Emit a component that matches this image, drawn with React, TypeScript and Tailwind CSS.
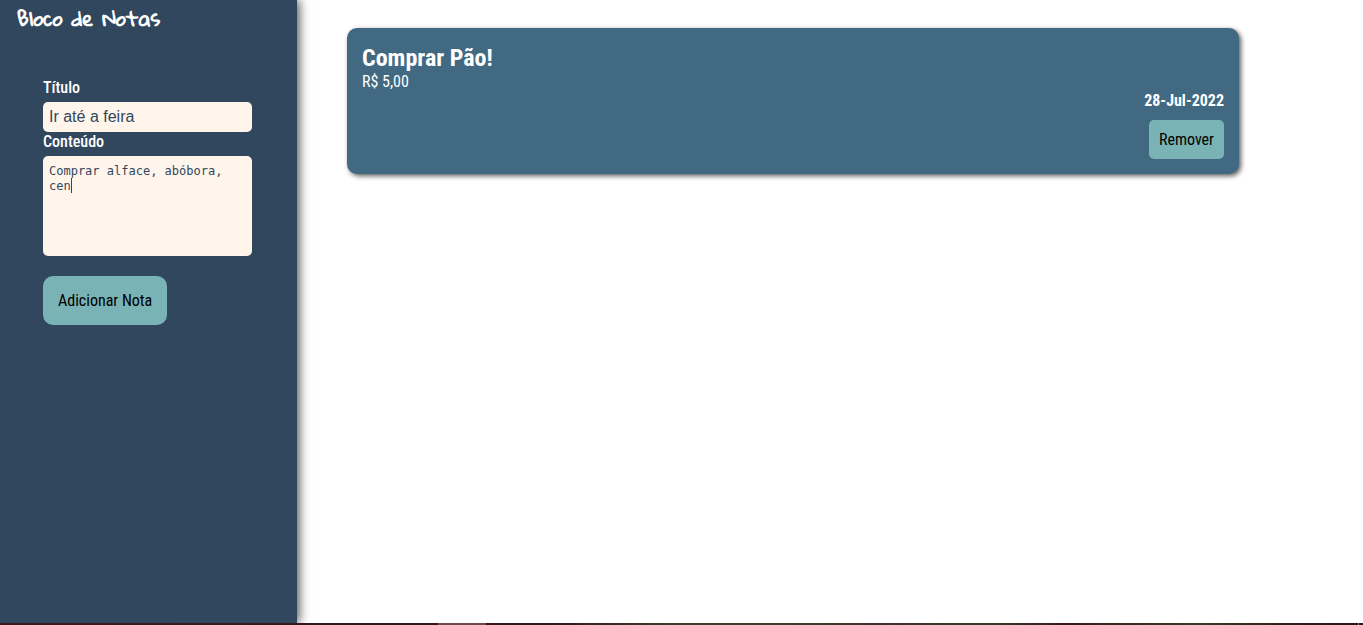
import { useState } from "react";

const condensed = "font-['Roboto_Condensed','Liberation_Sans_Narrow','Roboto',sans-serif]";

type Note = { id: number; title: string; content: string; date: string };

function NoteCard({ note, onRemove }: { note: Note; onRemove: () => void }) {
  return (
    <article className="flex flex-col rounded-[10px] bg-[#426982] p-[15px] text-white shadow-[2px_2px_5px_#000000a6]">
      <h2 className="pt-px text-2xl leading-7 font-bold">{note.title}</h2>
      <p className="text-base leading-[19px]">{note.content}</p>
      <time className="self-end text-base leading-[19px] font-bold">{note.date}</time>
      <button
        type="button"
        onClick={onRemove}
        className="mt-2.5 h-[39px] self-end rounded-[5px] bg-[#7ab3b5] px-2.5 text-base text-black"
      >
        Remover
      </button>
    </article>
  );
}

export default function App() {
  const [title, setTitle] = useState("Ir até a feira");
  const [content, setContent] = useState("Comprar alface, abóbora, cen");
  const [notes, setNotes] = useState<Note[]>([
    { id: 1, title: "Comprar Pão!", content: "R$ 5,00", date: "28-Jul-2022" },
  ]);

  return (
    <div className={`flex h-screen flex-col bg-white ${condensed}`}>
      <div className="flex min-h-0 flex-1 overflow-hidden">
        <aside className="w-[297px] shrink-0 bg-[#31475e] text-white shadow-[2px_0_10px_#000000b3]">
          <h1 className="pl-[17px] font-['Gloria_Hallelujah','Lato',cursive] text-xl leading-9 font-bold">
            Bloco de Notas
          </h1>
          <form
            className="flex flex-col items-start pt-[42px] pr-[45px] pl-[43px]"
            onSubmit={(e) => {
              e.preventDefault();
              setNotes([...notes, { id: Date.now(), title, content, date: "28-Jul-2022" }]);
            }}
          >
            <label htmlFor="title" className="text-base leading-[19px] font-medium">
              Título
            </label>
            <input
              id="title"
              value={title}
              onChange={(e) => setTitle(e.target.value)}
              className="mt-[5px] h-[30px] w-full rounded-[5px] bg-[#fff5eb] px-1.5 font-['Liberation_Sans',sans-serif] text-base text-[#31475e] outline-none"
            />
            <label htmlFor="content" className="text-base leading-[19px] font-medium">
              Conteúdo
            </label>
            <div className="relative mt-[5px] w-full">
              <textarea
                id="content"
                value={content}
                onChange={(e) => setContent(e.target.value)}
                className="block h-[100px] w-full resize-none rounded-[5px] bg-[#fff5eb] px-1.5 py-2 font-['DejaVu_Sans_Mono',monospace] text-xs leading-[15px] text-[#31475e] outline-none"
              />
              <span className="absolute top-[22px] left-[28px] h-[15px] w-px bg-[#31475e]" />
            </div>
            <button
              type="submit"
              className="mt-5 h-[49px] rounded-[10px] bg-[#7ab3b5] px-[15px] text-base text-black"
            >
              Adicionar Nota
            </button>
          </form>
        </aside>
        <main className="flex-1 pt-7 pr-[124px] pl-[50px]">
          {notes.map((note) => (
            <NoteCard
              key={note.id}
              note={note}
              onRemove={() => setNotes(notes.filter((n) => n.id !== note.id))}
            />
          ))}
        </main>
      </div>
      <footer className="flex h-0.5 bg-[linear-gradient(90deg,#3a1a1a_0%,#351718_40%,#3f3d2e_50%,#3f3d2e_58%,#42302a_64%,#38382a_73%,#3a1a1a_78%,#3a3a28_88%,#33201a_94%,#2c1218_100%)]">
        <span className="ml-[438px] w-12 bg-[#6e4a4a]" />
        <span className="mr-1 ml-auto w-px bg-[#8a7478]" />
      </footer>
    </div>
  );
}
